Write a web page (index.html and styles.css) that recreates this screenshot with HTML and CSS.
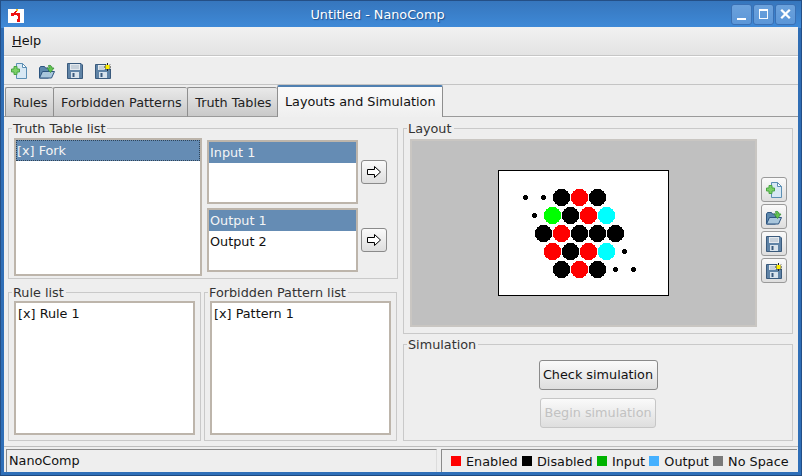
FILE: index.html
```html
<!DOCTYPE html>
<html lang="en">
<head>
<meta charset="utf-8">
<title>Untitled - NanoComp</title>
<link rel="stylesheet" href="styles.css">
</head>
<body>
<svg class="defs" width="0" height="0" aria-hidden="true">
  <defs>
    <symbol id="i-new" viewBox="0 0 16 16">
      <path d="M5.500 .5H11.500L15.500 4.500V15.500H5.500Z" fill="#d8e8f4" stroke="#5c8fb4"/>
      <path d="M11.500 .5V4.500H15.500Z" fill="#fff" stroke="#5c8fb4"/>
      <path d="M3 3.500H6V6H8.500V9H6V11.500H3V9H.5V6H3Z" fill="#7bd066" stroke="#4aa545"/>
    </symbol>
    <symbol id="i-open" viewBox="0 0 16 16">
      <path d="M.5 5L1.500 3.500H5.500L6.500 5H9.500V15H.5Z" fill="#5d88ad" stroke="#2c5580"/>
      <path d="M.5 15L3.500 8.500H15.500L12.500 15Z" fill="#a9c6dc" stroke="#2c5580"/>
      <path d="M9.500 2.500C11.500 2 13 3 13 5H15L11.500 9.500L8 5H10.500C10.500 4 10 3.500 9.500 3.500Z" fill="#63c450" stroke="#3b8f3a" stroke-width=".8"/>
    </symbol>
    <symbol id="i-save" viewBox="0 0 16 16">
      <path d="M.5 .5H14L15.500 2V15.500H.5Z" fill="#5f83a6" stroke="#3a5a7c"/>
      <rect x="3" y="1" width="10" height="6" fill="#e4e9ee"/>
      <path d="M4 3H12M4 5H12" stroke="#a9b8c6"/>
      <rect x="4" y="9" width="8" height="6" fill="#d8e3ec"/>
      <rect x="5.500" y="10" width="2" height="4" fill="#3a5a7c"/>
    </symbol>
    <symbol id="i-saveas" viewBox="0 0 16 16">
      <path d="M.5 1.500H11V6H15.500V15.500H.5Z" fill="#5f83a6" stroke="#3a5a7c"/>
      <rect x="3" y="2" width="7" height="5" fill="#e4e9ee"/>
      <path d="M4 4H9M4 6H9" stroke="#a9b8c6"/>
      <rect x="4" y="9" width="8" height="6" fill="#d8e3ec"/>
      <rect x="5.500" y="10" width="2" height="4" fill="#3a5a7c"/>
      <path d="M12.500 0V8M9 4H16M10 1.500L15 6.500M15 1.500L10 6.500" stroke="#222"/>
      <rect x="10.500" y="2" width="4" height="4" fill="#ffee00"/>
    </symbol>
    <symbol id="i-arrow" viewBox="0 0 14 12">
      <path d="M.5 3.500H7.500V.5L13.500 6L7.500 11.500V8.500H.5Z" fill="#fff" stroke="#000"/>
    </symbol>
  </defs>
</svg>
<div class="window">
  <header class="titlebar">
    <svg class="app-icon" viewBox="0 0 16 14" width="16" height="14" shape-rendering="crispEdges">
      <rect width="16" height="14" fill="#fff"/>
      <path d="M9 2L5 5H11V12" fill="none" stroke="#e81010" stroke-width="1.500"/>
      <rect x="8" y="0" width="2" height="2" fill="#f0c020"/>
      <rect x="3" y="4" width="3" height="3" fill="#f01010"/>
      <rect x="9" y="4" width="3" height="3" fill="#f01010"/>
      <rect x="9" y="10" width="3" height="3" fill="#f01010"/>
    </svg>
    <div class="title">Untitled - NanoComp</div>
    <div class="win-buttons">
      <div class="win-btn"><svg viewBox="0 0 20 20" width="20" height="20" shape-rendering="crispEdges"><rect x="5" y="14" width="10" height="2" fill="#fff"/></svg></div>
      <div class="win-btn"><svg viewBox="0 0 20 20" width="20" height="20" shape-rendering="crispEdges"><path d="M6 5.500H14.500V14.500H5.500V5.500" fill="none" stroke="#fff"/><rect x="5" y="5" width="10" height="2" fill="#fff"/></svg></div>
      <div class="win-btn"><svg viewBox="0 0 20 20" width="20" height="20"><path d="M5.500 5.500L14.500 14.500M14.500 5.500L5.500 14.500" stroke="#fff" stroke-width="2.400"/></svg></div>
    </div>
  </header>
  <div class="client">
    <nav class="menubar"><span class="menu-item"><u>H</u>elp</span></nav>
    <div class="toolbar">
      <svg class="icon"><use href="#i-new"/></svg>
      <svg class="icon"><use href="#i-open"/></svg>
      <svg class="icon"><use href="#i-save"/></svg>
      <svg class="icon"><use href="#i-saveas"/></svg>
    </div>
    <div class="tabs">
      <div class="tab">Rules</div>
      <div class="tab">Forbidden Patterns</div>
      <div class="tab">Truth Tables</div>
      <div class="tab active">Layouts and Simulation</div>
    </div>
    <main class="panel">
      <div class="col">
        <fieldset class="group group-truth">
          <legend>Truth Table list</legend>
          <div class="truth-body">
            <div class="list list-truth">
              <div class="row selected focused">[x] Fork</div>
            </div>
            <div class="io">
              <div class="io-row">
                <div class="list list-io">
                  <div class="row selected">Input 1</div>
                </div>
                <button class="btn arrow-btn"><svg class="arrow"><use href="#i-arrow"/></svg></button>
              </div>
              <div class="io-row">
                <div class="list list-io">
                  <div class="row selected">Output 1</div>
                  <div class="row">Output 2</div>
                </div>
                <button class="btn arrow-btn"><svg class="arrow"><use href="#i-arrow"/></svg></button>
              </div>
            </div>
          </div>
        </fieldset>
        <div class="pair">
          <fieldset class="group group-sub">
            <legend>Rule list</legend>
            <div class="list list-fill"><div class="row plain">[x] Rule 1</div></div>
          </fieldset>
          <fieldset class="group group-sub">
            <legend>Forbidden Pattern list</legend>
            <div class="list list-fill"><div class="row plain">[x] Pattern 1</div></div>
          </fieldset>
        </div>
      </div>
      <div class="col col-right">
        <fieldset class="group group-layout">
          <legend>Layout</legend>
          <div class="layout-body">
            <div class="viewport">
              <svg class="canvas" viewBox="0 0 171 126" width="171" height="126" shape-rendering="crispEdges">
                <rect x=".5" y=".5" width="170" height="125" fill="#fff" stroke="#000"/>
                <g fill="#000">
                  <circle cx="27.500" cy="27.500" r="2.500"/><circle cx="45.500" cy="27.500" r="2.500"/>
                  <circle cx="36.500" cy="45.500" r="2.500"/><circle cx="126.500" cy="81.500" r="2.500"/>
                  <circle cx="117.500" cy="99.500" r="2.500"/><circle cx="135.500" cy="99.500" r="2.500"/>
                  <circle cx="63.500" cy="27.500" r="8.700"/><circle cx="99.500" cy="27.500" r="8.700"/>
                  <circle cx="72.500" cy="45.500" r="8.700"/>
                  <circle cx="45.500" cy="63.500" r="8.700"/><circle cx="81.500" cy="63.500" r="8.700"/>
                  <circle cx="99.500" cy="63.500" r="8.700"/><circle cx="117.500" cy="63.500" r="8.700"/>
                  <circle cx="72.500" cy="81.500" r="8.700"/>
                  <circle cx="63.500" cy="99.500" r="8.700"/><circle cx="99.500" cy="99.500" r="8.700"/>
                </g>
                <g fill="#f00">
                  <circle cx="81.500" cy="27.500" r="8.700"/><circle cx="90.500" cy="45.500" r="8.700"/>
                  <circle cx="63.500" cy="63.500" r="8.700"/><circle cx="54.500" cy="81.500" r="8.700"/>
                  <circle cx="90.500" cy="81.500" r="8.700"/><circle cx="81.500" cy="99.500" r="8.700"/>
                </g>
                <circle cx="54.500" cy="45.500" r="8.700" fill="#0f0"/>
                <g fill="#0ff">
                  <circle cx="108.500" cy="45.500" r="8.700"/><circle cx="108.500" cy="81.500" r="8.700"/>
                </g>
              </svg>
            </div>
            <div class="side">
              <button class="btn side-btn"><svg class="icon"><use href="#i-new"/></svg></button>
              <button class="btn side-btn"><svg class="icon"><use href="#i-open"/></svg></button>
              <button class="btn side-btn"><svg class="icon"><use href="#i-save"/></svg></button>
              <button class="btn side-btn"><svg class="icon"><use href="#i-saveas"/></svg></button>
            </div>
          </div>
        </fieldset>
        <fieldset class="group group-sim">
          <legend>Simulation</legend>
          <div class="sim-body">
            <button class="btn sim-btn">Check simulation</button>
            <button class="btn sim-btn disabled">Begin simulation</button>
          </div>
        </fieldset>
      </div>
    </main>
    <footer class="statusbar">
      <div class="status-left">NanoComp</div>
      <div class="status-right">
        <span class="key"><i class="swatch sw-red"></i>Enabled</span>
        <span class="key"><i class="swatch sw-black"></i>Disabled</span>
        <span class="key"><i class="swatch sw-green"></i>Input</span>
        <span class="key"><i class="swatch sw-blue"></i>Output</span>
        <span class="key"><i class="swatch sw-grey"></i>No Space</span>
      </div>
    </footer>
  </div>
</div>
</body>
</html>
```
FILE: styles.css
```css
* { box-sizing: border-box; }
html, body { margin: 0; padding: 0; }
body {
  width: 802px;
  height: 476px;
  overflow: hidden;
  font-family: "DejaVu Sans", sans-serif;
  font-size: 12.800px;
  color: #111;
  background: #3a7cc6;
}
.defs { display: block; width: 0; height: 0; }
.window {
  width: 802px;
  height: 476px;
  display: flex;
  flex-direction: column;
  background: linear-gradient(#3676bd, #3f8ad8 27px, #2f6db4 27px, #2f6fb8);
  border-top: 1px solid #244f86;
  border-bottom: 1px solid #1f4a80;
  box-shadow: inset 1px 0 #244f86, inset -1px 0 #244f86;
}
.titlebar {
  height: 26px;
  flex: none;
  display: flex;
  align-items: center;
  padding: 0 6px 0 8px;
}
.app-icon { flex: none; margin-top: 3px; }
.title {
  flex: 1;
  text-align: center;
  color: #fff;
  text-shadow: 1px 1px 1px #1f4f8c;
}
.win-buttons { display: flex; gap: 1px; flex: none; }
.win-btn {
  width: 21px;
  height: 21px;
  border: 1px solid #3a70b4;
  border-radius: 3px;
  background: linear-gradient(#6ba1dc, #5c97d8);
  display: flex;
  align-items: center;
  justify-content: center;
}
.client {
  margin: 0 4px 3px 4px;
  flex: 1;
  display: flex;
  flex-direction: column;
  background: #eeeeee;
  min-height: 0;
}
.menubar {
  height: 29px;
  flex: none;
  display: flex;
  align-items: center;
  padding: 0 0 1px 8px;
  background: linear-gradient(#f1f1f1, #e3e3e3);
  border-bottom: 1px solid #c6c6c6;
}
.toolbar {
  height: 29px;
  flex: none;
  display: flex;
  align-items: center;
  gap: 12px;
  padding-left: 7px;
  border-top: 1px solid #fff;
  border-bottom: 1px solid #c4c4c4;
}
.icon { width: 16px; height: 16px; display: block; flex: none; }
.tabs {
  height: 32px;
  flex: none;
  display: flex;
  align-items: flex-end;
  padding-left: 1px;
  margin-bottom: -1px;
  position: relative;
  z-index: 1;
}
.tab {
  height: 30px;
  padding: 0 5.500px 0 7px;
  display: flex;
  align-items: center;
  background: linear-gradient(#e9e9e9, #c9c9c9);
  border: 1px solid #8e8e8e;
  border-right: 0;
  border-bottom: 1px solid #9a9a9a;
  border-radius: 2px 2px 0 0;
  color: #222;
}
.tab.active {
  height: 32px;
  padding: 0 6px 1px 7px;
  background: linear-gradient(#fafafa, #efefef);
  border: 1px solid #8e8e8e;
  border-top: 2px solid #4f7fb0;
  border-bottom: 0;
  color: #111;
}
.panel {
  height: 331px;
  flex: none;
  display: grid;
  grid-template-columns: 390px 390px;
  column-gap: 5px;
  padding: 4px 0 0 4px;
  border-top: 1px solid #9a9a9a;
  border-bottom: 1px solid #bdbdbd;
}
.col { display: flex; flex-direction: column; gap: 6px; }
.col-right { gap: 3px; }
.group {
  margin: 0;
  min-width: 0;
  border: 1px solid #c9c9c9;
  padding: 3px 5px 4px 5px;
}
.group legend {
  padding: 0 2px 0 1px;
  margin-left: -2px;
  color: #333;
  line-height: 15px;
}
.group-truth { height: 158px; }
.truth-body { display: flex; gap: 5px; }
.list {
  background: #fff;
  border: 2px solid #bdb5ab;
  overflow: hidden;
}
.list-truth { width: 188px; height: 138px; margin-top: -1px; }
.row {
  height: 21px;
  line-height: 22px;
  padding-left: 1px;
  color: #111;
}
.row.selected { background: #658cb4; color: #f4f4f4; }
.row.focused { outline: 1px dotted #2f4458; outline-offset: -1px; }
.io { display: flex; flex-direction: column; gap: 4px; padding-top: 1px; }
.io-row { display: flex; align-items: center; gap: 3px; }
.list-io { width: 151px; height: 64px; }
.btn {
  font: inherit;
  color: #111;
  padding: 0;
  border: 1px solid #8a8a8a;
  border-radius: 3px;
  background: linear-gradient(#fafafa, #dedede);
  display: flex;
  align-items: center;
  justify-content: center;
}
.arrow-btn { width: 26px; height: 24px; }
.arrow { width: 14px; height: 12px; display: block; }
.pair { display: grid; grid-template-columns: 193px 193px; column-gap: 3px; }
.group-sub { height: 156px; padding-top: 1px; }
.list-fill { height: 134px; padding: 0 0 0 1px; }
.row.plain { padding-left: 1px; }
.group-layout { height: 213px; padding: 3px 5px 0 5px; }
.layout-body { display: flex; gap: 4px; padding-left: 1px; }
.viewport {
  width: 347px;
  height: 188px;
  background: #c0c0c0;
  border: 2px solid #c9c6c2;
  display: flex;
  align-items: center;
  justify-content: center;
}
.canvas { display: block; }
.side { display: flex; flex-direction: column; gap: 2px; padding-top: 38px; }
.side-btn { width: 26px; height: 25px; border-color: #9a9a9a; }
.group-sim { height: 104px; padding: 8px 5px 0 5px; }
.sim-body { display: flex; flex-direction: column; align-items: center; gap: 8px; }
.sim-btn { width: 119px; height: 30px; padding-bottom: 1px; }
.sim-btn.disabled { width: 116px; color: #c2c2c2; border-color: #c6c6c6; }
.statusbar {
  height: 25px;
  flex: none;
  display: flex;
  gap: 4px;
  padding: 2px 1px 0 2px;
}
.status-left {
  width: 431px;
  border-top: 1px solid #8a8a8a;
  border-left: 1px solid #8a8a8a;
  border-right: 1px solid #dcdcdc;
  padding-left: 2px;
  line-height: 21px;
}
.status-right {
  flex: 1;
  display: flex;
  gap: 4.300px;
  padding-left: 9px;
  border-top: 1px solid #8a8a8a;
  border-left: 1px solid #8a8a8a;
  line-height: 21px;
}
.key { display: flex; align-items: center; gap: 5px; white-space: nowrap; }
.swatch { width: 10px; height: 10px; display: block; flex: none; }
.sw-red { background: #ff0000; }
.sw-black { background: #000; }
.sw-green { background: #00b300; }
.sw-blue { background: #44b0ff; }
.sw-grey { background: #7a7a7a; }
```
